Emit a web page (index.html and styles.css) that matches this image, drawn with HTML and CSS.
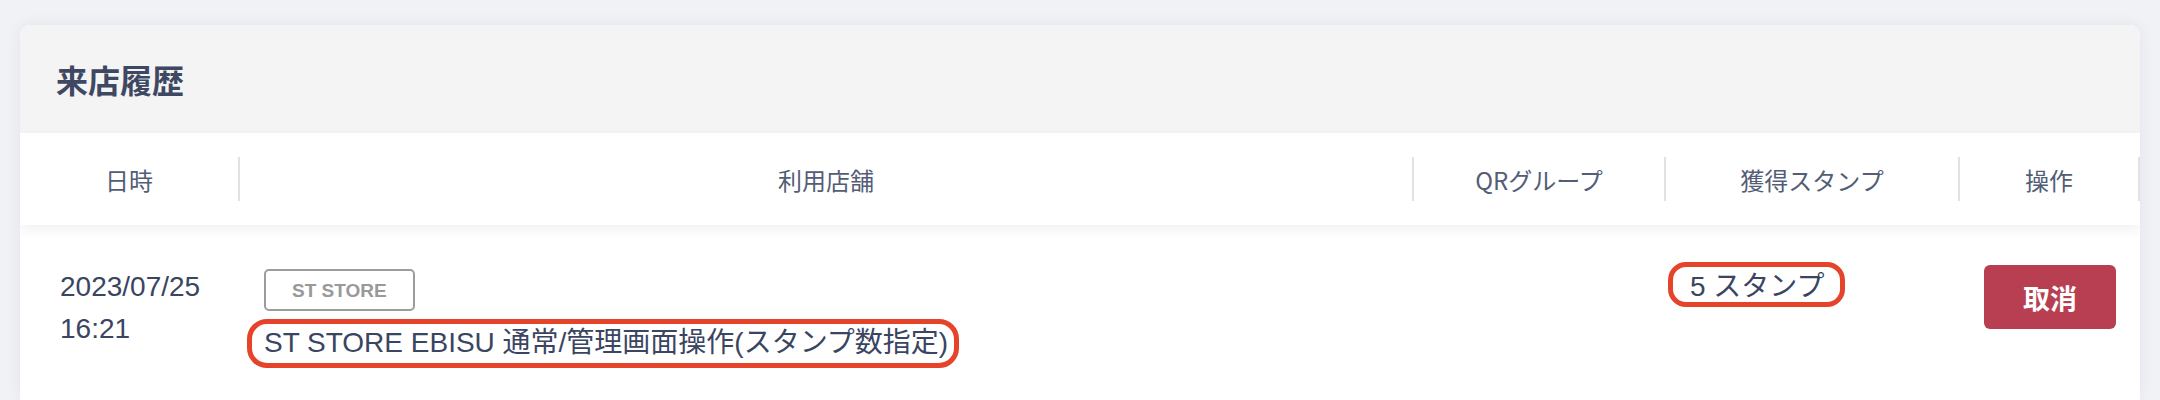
FILE: index.html
```html
<!DOCTYPE html>
<html lang="ja">
<head>
<meta charset="utf-8">
<title>来店履歴</title>
<link rel="stylesheet" href="styles.css">
</head>
<body>
<section class="card">
  <header class="card-head">
    <h2 class="card-title">来店履歴</h2>
  </header>
  <div class="table">
    <div class="thead">
      <div class="th">日時</div>
      <div class="th">利用店舗</div>
      <div class="th">QRグループ</div>
      <div class="th">獲得スタンプ</div>
      <div class="th">操作</div>
    </div>
    <div class="tr">
      <div class="td td-date">
        <div class="line">2023/07/25</div>
        <div class="line">16:21</div>
      </div>
      <div class="td td-store">
        <span class="badge">ST STORE</span>
        <div class="line store-name"><span class="mark mark-store">ST STORE EBISU 通常/管理画面操作(スタンプ数指定)</span></div>
      </div>
      <div class="td td-qr"></div>
      <div class="td td-stamp">
        <div class="line"><span class="mark mark-stamp">5 スタンプ</span></div>
      </div>
      <div class="td td-action">
        <button class="btn-cancel" type="button">取消</button>
      </div>
    </div>
  </div>
</section>
</body>
</html>
```

FILE: styles.css
```css
* { box-sizing: border-box; }

html, body {
  margin: 0;
  padding: 0;
}

body {
  background: #f1f2f6;
  font-family: "Liberation Sans", "Noto Sans CJK JP", sans-serif;
  color: #3a4561;
  height: 400px;
  overflow: hidden;
}

.card {
  margin: 25px 20px 0;
  width: 2120px;
  height: 375px;
  background: #ffffff;
  border-radius: 10px 10px 0 0;
  box-shadow: 0 0 16px rgba(30, 40, 70, 0.07);
  overflow: hidden;
}

.card-head {
  height: 108px;
  background: #f4f4f4;
  display: flex;
  align-items: center;
  padding-left: 36px;
}

.card-title {
  margin: 0;
  font-family: "Noto Sans CJK JP", sans-serif;
  font-size: 32px;
  font-weight: 700;
  color: #3e4862;
}

.thead,
.tr {
  display: grid;
  grid-template-columns: 220px 1174px 252px 294px 180px;
}

.thead {
  position: relative;
  z-index: 1;
  background: #ffffff;
  padding: 24px 0;
  box-shadow: 0 5px 12px rgba(0, 0, 0, 0.06);
}

.th {
  height: 44px;
  display: flex;
  align-items: center;
  justify-content: center;
  border-right: 2px solid #e2e2e2;
  font-family: "Noto Sans CJK JP", sans-serif;
  font-size: 24px;
  font-weight: 400;
  color: #535d76;
}

.tr {
  background: #ffffff;
}

.td {
  padding-top: 41px;
  padding-bottom: 40px;
  font-size: 28px;
  line-height: 42px;
}

.td-date {
  padding-left: 40px;
}

.td-store,
.td-stamp {
  padding-left: 24px;
}

.badge {
  display: inline-flex;
  align-items: center;
  height: 42px;
  margin-top: 3px;
  padding: 0 26px;
  border: 2px solid #9c9c9c;
  border-radius: 5px;
  font-size: 19px;
  font-weight: 700;
  color: #999999;
  line-height: 1;
}

.store-name {
  margin-top: 11px;
}

.mark {
  position: relative;
}

.mark::after {
  content: "";
  position: absolute;
  border: 5px solid #e6432b;
  border-radius: 20px;
  pointer-events: none;
}

.mark-store::after {
  top: -8px;
  bottom: -10px;
  left: -17px;
  right: -11px;
}

.mark-stamp::after {
  top: -9px;
  bottom: -5px;
  left: -22px;
  right: -20px;
  border-radius: 18px;
}

.td-action {
  padding-top: 40px;
  display: flex;
  justify-content: center;
  align-items: flex-start;
}

.btn-cancel {
  width: 132px;
  height: 64px;
  border: none;
  border-radius: 6px;
  background: #b83f52;
  color: #ffffff;
  font-family: "Noto Sans CJK JP", sans-serif;
  font-size: 27px;
  font-weight: 700;
  cursor: pointer;
  padding: 0;
}
```
